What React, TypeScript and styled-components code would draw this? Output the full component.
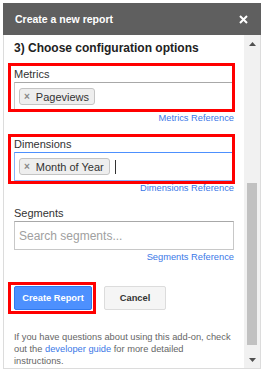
import styled, { createGlobalStyle } from 'styled-components';

const GlobalStyle = createGlobalStyle`
  body {
    margin: 0;
    background: #ffffff;
    font-family: 'Liberation Sans', Arial, sans-serif;
  }
`;

const Dialog = styled.div`
  margin: 3px;
  width: 258px;
  display: flex;
  flex-direction: column;
`;

const TitleBar = styled.div`
  height: 32px;
  background-color: #5f5f5f;
  color: #ffffff;
  display: flex;
  align-items: center;
  justify-content: space-between;
  padding: 0 13px 0 12px;
  font-size: 10.5px;
  font-weight: 700;
`;

const Body = styled.div`
  height: 333px;
  display: flex;
  border: 1px solid #dcdcdc;
  border-top: none;
`;

const Content = styled.div`
  flex: 1;
  padding: 4px 10px 0 10px;
  overflow: hidden;
`;

const Heading = styled.div`
  font-size: 12px;
  font-weight: 700;
  line-height: 18px;
  color: #222222;
  margin-bottom: 9px;
`;

const Field = styled.div<{ $gap: number }>`
  display: flex;
  flex-direction: column;
  margin-bottom: ${(p) => p.$gap}px;
`;

const Highlight = styled.div<{ $t: number; $r: number; $b: number; $l: number }>`
  position: relative;

  &::after {
    content: '';
    position: absolute;
    top: ${(p) => -p.$t}px;
    right: ${(p) => -p.$r}px;
    bottom: ${(p) => -p.$b}px;
    left: ${(p) => -p.$l}px;
    border: 3px solid #ff0000;
    pointer-events: none;
  }
`;

const Label = styled.div`
  font-size: 11px;
  line-height: 16px;
  color: #333333;
`;

const InputBox = styled.div<{ $focused?: boolean }>`
  height: 29px;
  box-sizing: border-box;
  border: 1px solid ${(p) => (p.$focused ? '#8ab4f8' : '#c8c8c8')};
  border-top-color: ${(p) => (p.$focused ? '#4d90fe' : '#a8a8a8')};
  display: flex;
  align-items: center;
  gap: 5px;
  padding: 0 4px;
  background: #ffffff;
`;

const Placeholder = styled.span`
  font-size: 12px;
  color: #a0a0a0;
`;

const Chip = styled.span`
  display: inline-flex;
  align-items: center;
  gap: 6px;
  height: 17px;
  box-sizing: border-box;
  padding: 0 5px 0 4px;
  border: 1px solid #c4c4c4;
  border-radius: 3px;
  background: #eeeeee;
  font-size: 11px;
  color: #333333;
`;

const ChipRemove = styled.span`
  font-size: 10px;
  font-weight: 700;
  color: #888888;
`;

const Caret = styled.span`
  width: 1px;
  height: 14px;
  background: #333333;
`;

const RefLink = styled.a`
  align-self: flex-end;
  margin-top: 1px;
  font-size: 9.3px;
  line-height: 13px;
  color: #3b78e7;
  text-decoration: none;
`;

const Actions = styled.div`
  display: flex;
  gap: 12px;
  margin-top: 22px;
`;

const Button = styled.button<{ $primary?: boolean }>`
  height: 24px;
  width: ${(p) => (p.$primary ? 78 : 62)}px;
  border-radius: 2px;
  border: 1px solid ${(p) => (p.$primary ? '#3079ed' : '#dcdcdc')};
  background: ${(p) => (p.$primary ? '#4d90fe' : '#f5f5f5')};
  color: ${(p) => (p.$primary ? '#ffffff' : '#333333')};
  font-family: 'Liberation Sans', Arial, sans-serif;
  font-size: 9.3px;
  font-weight: 700;
  padding: 0;
  cursor: pointer;
`;

const Help = styled.p`
  margin: 21px 0 0 0;
  font-size: 9.3px;
  line-height: 12px;
  color: #666666;

  a {
    color: #3b78e7;
    text-decoration: none;
  }
`;

const Scrollbar = styled.div`
  width: 16px;
  background: #f1f1f1;
  display: flex;
  flex-direction: column;
`;

const ScrollArrow = styled.div`
  height: 17px;
  display: flex;
  align-items: center;
  justify-content: center;
`;

const Track = styled.div`
  flex: 1;
  display: flex;
  flex-direction: column;
  justify-content: flex-end;
  padding-bottom: 6px;
`;

const Thumb = styled.div`
  height: 162px;
  width: 10px;
  margin-left: 3px;
  background: #c1c1c1;
`;

function Triangle({ down }: { down?: boolean }) {
  return (
    <svg width="7" height="4" viewBox="0 0 7 4">
      <path d={down ? 'M0 0 H7 L3.5 4 Z' : 'M0 4 H7 L3.5 0 Z'} fill="#505050" />
    </svg>
  );
}

export default function App() {
  return (
    <>
      <GlobalStyle />
      <Dialog>
        <TitleBar>
          <span>Create a new report</span>
          <svg width="9" height="9" viewBox="0 0 9 9">
            <path d="M1 1 L8 8 M8 1 L1 8" stroke="#ffffff" strokeWidth="2" />
          </svg>
        </TitleBar>
        <Body>
          <Content>
            <Heading>3) Choose configuration options</Heading>

            <Field $gap={11}>
              <Highlight $t={3} $r={1} $b={1} $l={6}>
                <Label>Metrics</Label>
                <InputBox>
                  <Chip>
                    <ChipRemove>×</ChipRemove>Pageviews
                  </Chip>
                </InputBox>
              </Highlight>
              <RefLink href="#">Metrics Reference</RefLink>
            </Field>

            <Field $gap={10}>
              <Highlight $t={2} $r={1} $b={3} $l={6}>
                <Label>Dimensions</Label>
                <InputBox $focused>
                  <Chip>
                    <ChipRemove>×</ChipRemove>Month of Year
                  </Chip>
                  <Caret />
                </InputBox>
              </Highlight>
              <RefLink href="#">Dimensions Reference</RefLink>
            </Field>

            <Field $gap={0}>
              <Label>Segments</Label>
              <InputBox>
                <Placeholder>Search segments...</Placeholder>
              </InputBox>
              <RefLink href="#">Segments Reference</RefLink>
            </Field>

            <Actions>
              <Highlight $t={4} $r={4} $b={4} $l={6}>
                <Button $primary>Create Report</Button>
              </Highlight>
              <Button>Cancel</Button>
            </Actions>

            <Help>
              If you have questions about using this add-on, check
              <br />
              out the <a href="#">developer guide</a> for more detailed
              <br />
              instructions.
            </Help>
          </Content>
          <Scrollbar>
            <ScrollArrow>
              <Triangle />
            </ScrollArrow>
            <Track>
              <Thumb />
            </Track>
            <ScrollArrow>
              <Triangle down />
            </ScrollArrow>
          </Scrollbar>
        </Body>
      </Dialog>
    </>
  );
}
